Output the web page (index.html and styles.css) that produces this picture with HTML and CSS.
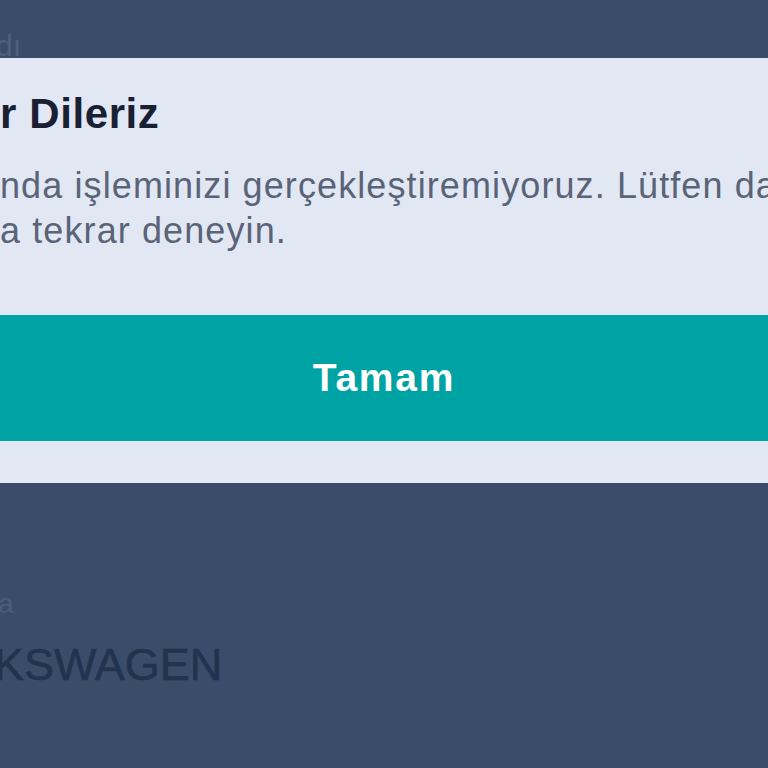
FILE: index.html
```html
<!DOCTYPE html>
<html lang="tr">
<head>
<meta charset="utf-8">
<link rel="stylesheet" href="styles.css">
</head>
<body>
<div class="page">
  <div class="bg-top">
    <div class="field-label">dı</div>
  </div>
  <div class="dialog">
    <h1 class="title">r Dileriz</h1>
    <div class="message">
      <p class="line">nda işleminizi gerçekleştiremiyoruz. Lütfen daha</p>
      <p class="line">a tekrar deneyin.</p>
    </div>
    <button class="ok-btn">Tamam</button>
  </div>
  <div class="bg-bottom">
    <div class="field-label small">a</div>
    <div class="field-value">KSWAGEN</div>
  </div>
</div>
</body>
</html>
```
FILE: styles.css
```css
html, body {
  margin: 0;
  padding: 0;
  width: 768px;
  height: 768px;
  overflow: hidden;
  background: #3a4c6a;
  font-family: "Liberation Sans", Arial, sans-serif;
}
.page {
  display: flex;
  flex-direction: column;
  width: 768px;
  height: 768px;
}
.bg-top {
  height: 58px;
  overflow: hidden;
  flex: none;
}
.bg-top .field-label {
  margin-top: 28px;
  margin-left: -4px;
  font-size: 30px;
  line-height: 36px;
  color: #4f5f7d;
}
.dialog {
  flex: none;
  background: #e1e8f4;
  padding: 32px 0 42px;
  display: flex;
  flex-direction: column;
  overflow: hidden;
}
.title {
  margin: 0;
  font-size: 42px;
  line-height: 48px;
  font-weight: 700;
  color: #1a2033;
  letter-spacing: 0.6px;
  white-space: nowrap;
}
.message {
  margin-top: 25px;
}
.line {
  margin: 0;
  font-size: 36px;
  line-height: 45px;
  color: #5a6378;
  letter-spacing: 1.1px;
  white-space: nowrap;
}
.ok-btn {
  margin-top: 62px;
  height: 126px;
  border: 0;
  padding: 0;
  width: 100%;
  background: #00a3a3;
  color: #ffffff;
  font-family: "Liberation Sans", Arial, sans-serif;
  font-size: 39px;
  font-weight: 700;
  letter-spacing: 1.8px;
  display: flex;
  align-items: center;
  justify-content: center;
}
.bg-bottom {
  flex: 1;
  padding-top: 104px;
}
.field-label.small {
  font-size: 28px;
  line-height: 34px;
  color: #4b5c7b;
  margin-left: -2px;
}
.field-value {
  margin-top: 18px;
  margin-left: -6px;
  font-size: 45px;
  line-height: 52px;
  color: #23334e;
  -webkit-text-stroke: 0.6px #23334e;
  white-space: nowrap;
}
```
